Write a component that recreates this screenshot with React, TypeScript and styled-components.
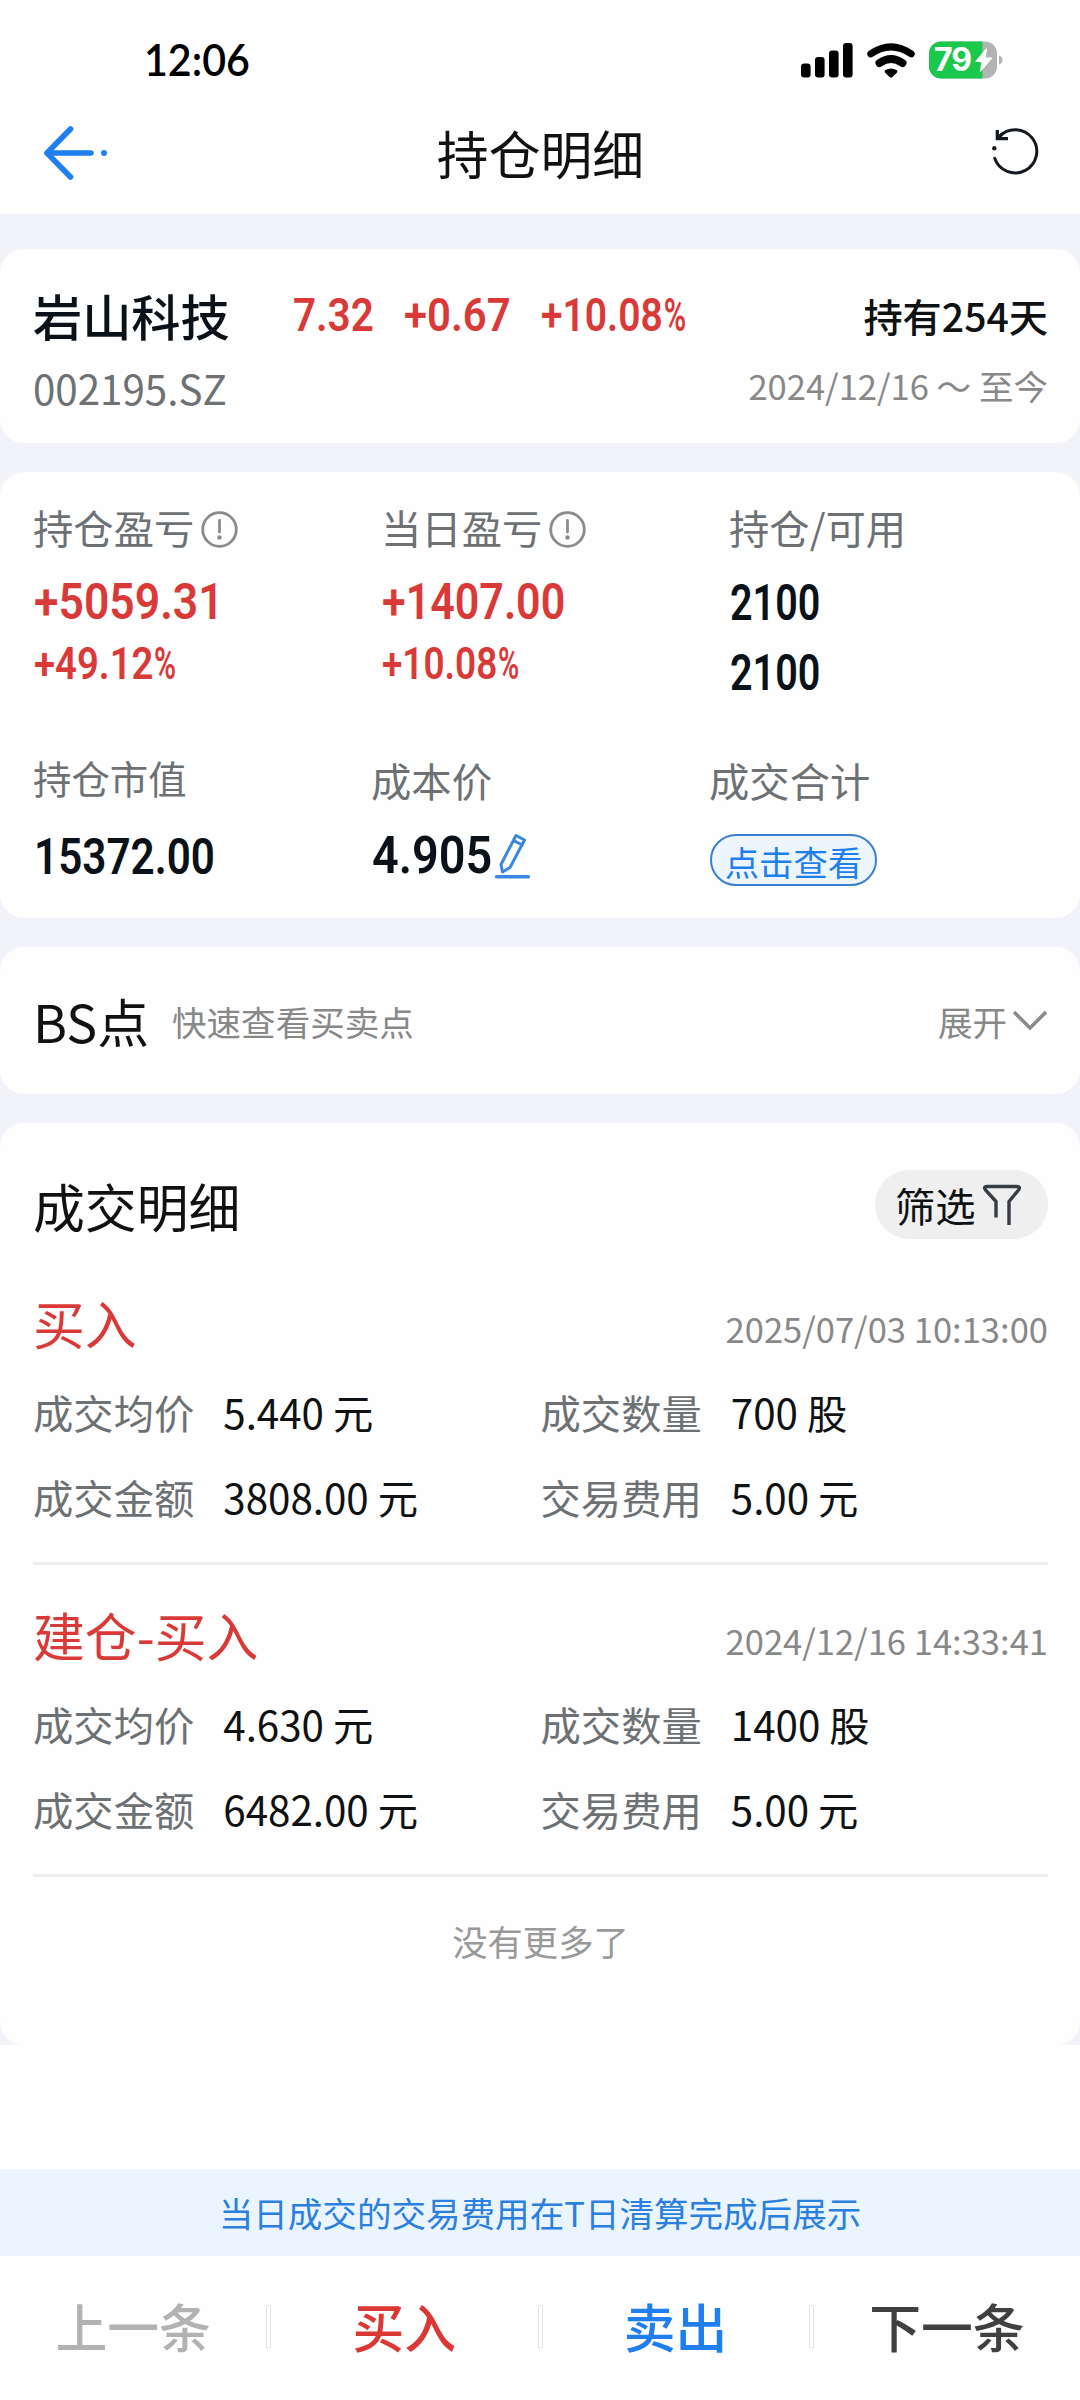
import React from 'react';
import styled, { createGlobalStyle } from 'styled-components';

const CJK = '"Noto Sans CJK SC", "Noto Sans", sans-serif';
const RED = '#d93a38';
const BLUE = '#1f7ef0';
const INK = '#0b1118';
const LABEL = '#6d7174';
const MUTED = '#888';

const GlobalStyle = createGlobalStyle`
  *, *::before, *::after { box-sizing: border-box; }
  html, body { margin: 0; padding: 0; background: #fff; }
  body { width: 1080px; font-family: ${CJK}; color: #101113; }
  svg { display: block; flex: none; }
`;

const Page = styled.div`
  width: 1080px;
  height: 2400px;
  overflow: hidden;
  display: flex;
  flex-direction: column;
  background: #fefefe;
`;

const StatusBar = styled.div`
  height: 120px;
  flex: none;
  display: flex;
  align-items: center;
  justify-content: space-between;
  padding: 0 76px 0 144px;
`;

const Clock = styled.div`
  font-family: Lato, ${CJK};
  font-size: 44px;
  line-height: 44px;
  font-weight: 600;
  color: #000;
  white-space: nowrap;
  margin-bottom: 2px;
  transform: scaleX(0.935);
  transform-origin: left center;
`;

const StatusIcons = styled.div`
  display: flex;
  align-items: center;
  gap: 14px;
`;

const Battery = styled.div`
  position: relative;
  width: 75px;
  height: 38px;
`;

const BatteryText = styled.span`
  position: absolute;
  left: 5px;
  top: 3px;
  font: 700 32px/32px Inter, sans-serif;
  letter-spacing: -1px;
  color: #fff;
`;

const NavBar = styled.div`
  height: 94px;
  flex: none;
  display: grid;
  grid-template-columns: 1fr auto 1fr;
  align-items: center;
  padding: 0 41px 31px 42px;
  & > :last-child { justify-self: end; }
`;

const Title = styled.h1<{ $mt?: number }>`
  margin: ${p => p.$mt ?? 0}px 0 0;
  font-size: 51.84px;
  line-height: 52px;
  font-weight: 400;
  white-space: nowrap;
`;

const Content = styled.main`
  flex: none;
  background: #f2f3f8;
  padding-top: 35px;
  display: flex;
  flex-direction: column;
  gap: 29px;
`;

const Card = styled.section<{ $h: number; $top?: number }>`
  height: ${p => p.$h}px;
  padding: ${p => p.$top ?? 0}px 32px 0 33px;
  background: #fefefe;
  border-radius: 24px;
`;

const Row = styled.div<{ $mt?: number }>`
  display: flex;
  justify-content: space-between;
  align-items: flex-start;
  margin-top: ${p => p.$mt ?? 0}px;
`;

const Text = styled.div<{ $size: number; $color?: string; $weight?: number; $mt?: number }>`
  font-size: ${p => p.$size}px;
  line-height: 50px;
  height: 50px;
  font-weight: ${p => p.$weight ?? 400};
  color: ${p => p.$color ?? '#101113'};
  margin-top: ${p => p.$mt ?? 0}px;
  white-space: nowrap;
`;

const Figure = styled(Text)<{ $scale: number; $w?: number }>`
  font-family: Roboto, sans-serif;
  font-weight: 570;
  width: ${p => (p.$w ? p.$w + 'px' : 'auto')};
  margin-left: 1px;
  transform: scaleX(${p => p.$scale});
  transform-origin: left center;
`;

const Percent = styled.span`
  display: inline-block;
  margin-left: 1px;
  font-weight: 650;
  transform: scaleX(0.78);
  transform-origin: left center;
`;

const Quote = styled.div`
  flex: 1;
  display: flex;
  padding-left: 62px;
`;

const Metrics = styled.div<{ $col: number; $mt?: number }>`
  display: grid;
  grid-template-columns: repeat(3, ${p => p.$col}px);
  margin-top: ${p => p.$mt ?? 0}px;
`;

const Metric = styled.div`
  display: flex;
  flex-direction: column;
  align-items: flex-start;
`;

const Inline = styled.div<{ $gap: number; $mt?: number }>`
  display: flex;
  align-items: center;
  gap: ${p => p.$gap}px;
  margin-top: ${p => p.$mt ?? 0}px;
`;

const ViewButton = styled.button`
  margin: 29px 0 0 1px;
  padding: 0;
  width: 167px;
  height: 52px;
  border: 2px solid #3b7fd0;
  border-radius: 26px;
  background: #edf6ff;
  color: ${BLUE};
  font: 400 34.4px/50px ${CJK};
  white-space: nowrap;
`;

const FilterButton = styled.button`
  display: flex;
  align-items: center;
  gap: 6px;
  width: 173px;
  height: 69px;
  padding: 0 0 0 20px;
  border: 0;
  border-radius: 35px;
  background: #efefef;
  color: #101113;
  font: 400 40.32px/69px ${CJK};
  white-space: nowrap;
`;

const Record = styled.article<{ $mt: number }>`
  margin-top: ${p => p.$mt}px;
  height: 268px;
  border-bottom: 3px solid #eee;
`;

const Details = styled.dl<{ $mt: number }>`
  margin: ${p => p.$mt}px 0 0;
  display: grid;
  grid-template-columns: 507.5px 1fr;
  row-gap: 35px;
`;

const Detail = styled.div`
  display: flex;
  gap: 29px;
  font-size: 40.32px;
  line-height: 50px;
  white-space: nowrap;
  dt { color: ${LABEL}; }
  dd { margin: 0; }
`;

const Notice = styled.div`
  margin-top: 124px;
  height: 87px;
  flex: none;
  background: #ebf5ff;
  color: #2b7fe0;
  text-align: center;
  font-size: 34.56px;
  line-height: 86px;
`;

const Tabs = styled.nav`
  flex: 1;
  display: flex;
  align-items: flex-start;
  padding-top: 49px;
`;

const Tab = styled.div<{ $color: string }>`
  flex: 1;
  text-align: center;
  font-size: 51.84px;
  line-height: 42px;
  font-weight: 500;
  color: ${p => p.$color};
  white-space: nowrap;
`;

const Divider = styled.div`
  width: 5px;
  height: 43px;
  border: 1.5px solid #e4e4e4;
  background: #fff;
`;

const Center = styled.div`
  display: flex;
  justify-content: center;
`;

const InfoSvg = styled.svg`
  margin-top: 4px;
`;

const InfoIcon = () => (
  <InfoSvg width="37" height="37" viewBox="0 0 37 37" fill="none" stroke="#8b8b8b" strokeWidth="2.8" strokeLinecap="round">
    <circle cx="18.5" cy="18.5" r="16.8" />
    <path d="M18.5 9.5V21" />
    <circle cx="18.5" cy="26.5" r="2.2" fill="#8b8b8b" stroke="none" />
  </InfoSvg>
);

const trades = [
  { side: '买入', time: '2025/07/03 10:13:00', price: '5.440 元', count: '700 股', amount: '3808.00 元' },
  { side: '建仓-买入', time: '2024/12/16 14:33:41', price: '4.630 元', count: '1400 股', amount: '6482.00 元' },
];

export default function App() {
  return (
    <>
      <GlobalStyle />
      <Page lang="zh-CN">
        <StatusBar>
          <Clock>12:06</Clock>
          <StatusIcons>
            <svg width="52" height="36" viewBox="0 0 52 36" fill="#000">
              <rect x="0" y="21.5" width="9.6" height="14" rx="3.2" />
              <rect x="14" y="15" width="9.6" height="20.5" rx="3.2" />
              <rect x="28" y="8.5" width="9.6" height="27" rx="3.2" />
              <rect x="42" y="1" width="9.6" height="34.5" rx="3.2" />
            </svg>
            <svg width="48" height="36" viewBox="0 0 48 36" fill="none" stroke="#000" strokeWidth="7" strokeLinecap="round">
              <path d="M3.8 11.9Q24 -2.2 44.2 11.9" />
              <path d="M12.5 21Q24 13 35.5 21" strokeWidth="8" />
              <path d="M18.5 28Q24 25 29.5 28Q31 29.5 29.8 30.7L25.5 35Q24 36.2 22.5 35L18.2 30.7Q17 29.5 18.5 28Z" fill="#000" stroke="none" />
            </svg>
            <Battery>
              <svg width="75" height="38" viewBox="0 0 75 38">
                <rect x="0" y="0.5" width="68" height="37" rx="12" fill="#b3b3b3" />
                <path d="M12 0.5H53.5V37.5H12A12 12 0 0 1 0 25.5V12.5A12 12 0 0 1 12 0.5Z" fill="#1ac84b" />
                <path d="M70 14.5Q73.5 15.5 73.5 19T70 23.5Z" fill="#b3b3b3" />
                <path d="M57.500 8L47 20.500H53L51.500 30L62.500 17H56Z" fill="#fff" stroke="#fff" strokeWidth="1.200" strokeLinejoin="round" />
              </svg>
              <BatteryText>79</BatteryText>
            </Battery>
          </StatusIcons>
        </StatusBar>
        <NavBar>
          <svg width="66" height="56" viewBox="0 0 66 56" fill="none" stroke={BLUE} strokeWidth="5.6" strokeLinecap="round" strokeLinejoin="round">
            <path d="M28.500 5L5 29L28.500 53M5 29H49" />
            <circle cx="62" cy="29" r="3" fill={BLUE} stroke="none" />
          </svg>
          <Title $mt={2}>持仓明细</Title>
          <svg width="50" height="52" viewBox="0 0 50 52" fill="none" stroke="#14191f" strokeWidth="3">
            <path d="M5.700 32.300A21.600 21.600 0 1 0 10.300 10.700" strokeLinecap="round" />
            <path d="M8.300 4V12.700H19" strokeWidth="3.200" />
            <path d="M8.500 12.500L13.500 7.500" strokeWidth="3.200" />
            <circle cx="5.300" cy="22.300" r="2.200" fill="#14191f" stroke="none" />
          </svg>
        </NavBar>

        <Content>
          <Card $h={194} $top={41}>
            <Row>
              <Text $size={49.2} $weight={500} $color={INK}>岩山科技</Text>
              <Quote>
                <Figure $size={46.5} $scale={0.87} $color={RED} $w={110}>7.32</Figure>
                <Figure $size={46.5} $scale={0.9} $color={RED} $w={136}>+0.67</Figure>
                <Figure $size={46.5} $scale={0.84} $color={RED}>+10.08<Percent>%</Percent></Figure>
              </Quote>
              <Text $size={39.2} $weight={500}>持有254天</Text>
            </Row>
            <Row $mt={20}>
              <Text $size={40.32} $mt={3} $color={LABEL}>002195.SZ</Text>
              <Text $size={34.56} $color={MUTED}>2024/12/16 ～ 至今</Text>
            </Row>
          </Card>

          <Card $h={446} $top={30}>
            <Metrics $col={348}>
              <Metric>
                <Inline $gap={7}>
                  <Text $size={40.32} $color={LABEL}>持仓盈亏</Text>
                  <InfoIcon />
                </Inline>
                <Figure $size={50} $scale={0.89} $color={RED} $mt={25}>+5059.31</Figure>
                <Figure $size={44} $scale={0.87} $color={RED} $mt={12}>+49.12<Percent>%</Percent></Figure>
              </Metric>
              <Metric>
                <Inline $gap={7}>
                  <Text $size={40.32} $color={LABEL}>当日盈亏</Text>
                  <InfoIcon />
                </Inline>
                <Figure $size={50} $scale={0.86} $color={RED} $mt={25}>+1407.00</Figure>
                <Figure $size={44} $scale={0.84} $color={RED} $mt={12}>+10.08<Percent>%</Percent></Figure>
              </Metric>
              <Metric>
                <Text $size={40.32} $color={LABEL}>持仓/可用</Text>
                <Figure $size={50} $scale={0.79} $color={INK} $mt={26}>2100</Figure>
                <Figure $size={50} $scale={0.79} $color={INK} $mt={20}>2100</Figure>
              </Metric>
            </Metrics>
            <Metrics $col={338} $mt={54}>
              <Metric>
                <Text $size={38.4} $color={LABEL}>持仓市值</Text>
                <Figure $size={50} $scale={0.845} $color={INK} $mt={30}>15372.00</Figure>
              </Metric>
              <Metric>
                <Text $size={40.32} $mt={3} $color={LABEL}>成本价</Text>
                <Inline $gap={0} $mt={26}>
                  <Figure $size={52} $scale={0.9} $color={INK} $w={122}>4.905</Figure>
                  <svg width="37" height="48" viewBox="0 0 37 48" fill="none" stroke="#3a86e4" strokeWidth="3" strokeLinejoin="round" strokeLinecap="round">
                    <path d="M22 3.5L30.5 8L16 35.5L8.5 40L7 32.5Z" />
                    <path d="M19.700 8.700L28.300 13" />
                    <path d="M2.500 44.700H34.500" strokeWidth="3.400" />
                  </svg>
                </Inline>
              </Metric>
              <Metric>
                <Text $size={40.32} $mt={3} $color={LABEL}>成交合计</Text>
                <ViewButton>点击查看</ViewButton>
              </Metric>
            </Metrics>
          </Card>

          <Card $h={147} $top={49}>
            <Row>
              <Inline $gap={23}>
                <Text $size={51.84}>BS点</Text>
                <Text $size={34.56} $color={MUTED}>快速查看买卖点</Text>
              </Inline>
              <Inline $gap={5}>
                <Text $size={34.56} $color={MUTED}>展开</Text>
                <svg width="36" height="24" viewBox="0 0 36 24" fill="none" stroke="#8c8c8c" strokeWidth="3.6">
                  <path d="M2 3L18 19L34 3" />
                </svg>
              </Inline>
            </Row>
          </Card>

          <Card $h={922} $top={47}>
            <Row>
              <Title as="h2" $mt={10}>成交明细</Title>
              <FilterButton>
                筛选
                <svg width="40" height="42" viewBox="0 0 40 42" fill="none" stroke="#353c43" strokeWidth="3.4">
                  <path d="M14 33.5V17.5L3.500 6Q1 2.500 5 2.500H35Q39 2.500 36.500 6L27 17.500V41" />
                </svg>
              </FilterButton>
            </Row>
            {trades.map((t, i) => (
              <Record key={t.time} $mt={i === 0 ? 58 : 44}>
                <Row>
                  <Text $size={51.84} $color={RED} $mt={1}>{t.side}</Text>
                  <Text $size={34.56} $color={MUTED} $mt={6}>{t.time}</Text>
                </Row>
                <Details $mt={34}>
                  <Detail><dt>成交均价</dt><dd>{t.price}</dd></Detail>
                  <Detail><dt>成交数量</dt><dd>{t.count}</dd></Detail>
                  <Detail><dt>成交金额</dt><dd>{t.amount}</dd></Detail>
                  <Detail><dt>交易费用</dt><dd>5.00 元</dd></Detail>
                </Details>
              </Record>
            ))}
            <Center>
              <Text $size={35.3} $color="#999" $mt={39}>没有更多了</Text>
            </Center>
          </Card>
        </Content>

        <Notice>当日成交的交易费用在T日清算完成后展示</Notice>
        <Tabs>
          <Tab $color="#b2b2b2">上一条</Tab>
          <Divider />
          <Tab $color="#db3735">买入</Tab>
          <Divider />
          <Tab $color={BLUE}>卖出</Tab>
          <Divider />
          <Tab $color="#404040">下一条</Tab>
        </Tabs>
      </Page>
    </>
  );
}
